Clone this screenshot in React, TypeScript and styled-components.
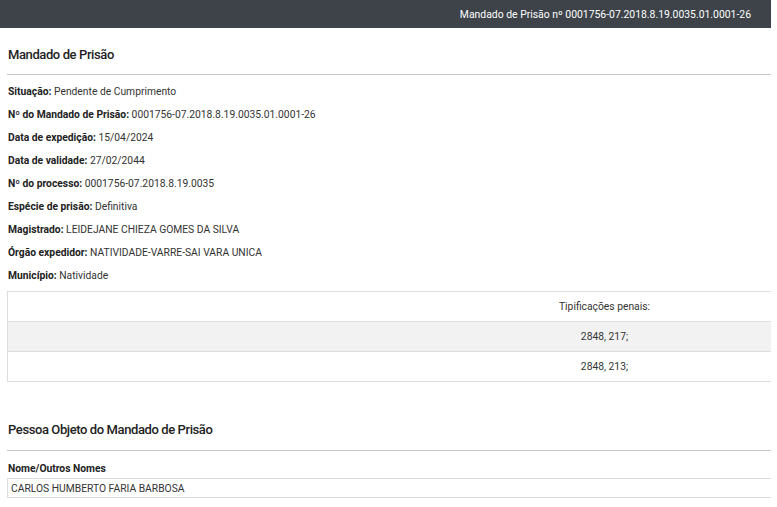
import React from 'react';
import styled, { createGlobalStyle } from 'styled-components';

const GlobalStyle = createGlobalStyle`
  body{
    margin:0;
    background:#fff;
    font-family:Roboto, "Liberation Sans", sans-serif;
    color:#333;
  }
`;

const Page = styled.div`
  width:771px;
`;

const TopBar = styled.div`
  height:28px;
  background:#3d4349;
  color:#fff;
  font-size:10.4px;
  display:flex;
  align-items:center;
  justify-content:flex-end;
  padding-right:20px;
  box-sizing:border-box;
`;

const Content = styled.div`
  padding:0 0 0 7px;
`;

const SectionTitle = styled.h2<{ $top: number; $bottom: number }>`
  margin:${p => p.$top}px 0 0 0;
  padding:0 0 ${p => p.$bottom}px 1px;
  font-size:13px;
  line-height:16px;
  letter-spacing:-0.4px;
  font-weight:500;
  color:#222;
  border-bottom:1px solid #c8c8c8;
`;

const Fields = styled.div`
  display:flex;
  flex-direction:column;
  gap:10px;
  padding:10px 0 0 1px;
`;

const Field = styled.div`
  font-size:10.3px;
  line-height:13px;
  color:#333;
  b{
    font-weight:700;
    color:#222;
  }
`;

const Table = styled.div`
  margin-top:9px;
  border:1px solid #ddd;
  border-right:0;
`;

const Row = styled.div<{ $striped?: boolean }>`
  display:grid;
  grid-template-columns:430px 1fr;
  height:29px;
  align-items:center;
  font-size:10.3px;
  color:#333;
  background:${p => (p.$striped ? '#f2f2f2' : '#fff')};
  & + &{
    border-top:1px solid #ddd;
  }
  span{
    text-align:center;
  }
`;

const Label = styled.div`
  margin:11px 0 0 1px;
  font-size:10.3px;
  line-height:13px;
  font-weight:700;
  color:#222;
`;

const NameBox = styled.div`
  margin-top:3px;
  height:18px;
  border:1px solid #ddd;
  border-right:0;
  display:flex;
  align-items:center;
  padding-left:3px;
  font-size:10.3px;
  color:#333;
`;

const fields: [string, string][] = [
  ['Situação:', 'Pendente de Cumprimento'],
  ['Nº do Mandado de Prisão:', '0001756-07.2018.8.19.0035.01.0001-26'],
  ['Data de expedição:', '15/04/2024'],
  ['Data de validade:', '27/02/2044'],
  ['Nº do processo:', '0001756-07.2018.8.19.0035'],
  ['Espécie de prisão:', 'Definitiva'],
  ['Magistrado:', 'LEIDEJANE CHIEZA GOMES DA SILVA'],
  ['Órgão expedidor:', 'NATIVIDADE-VARRE-SAI VARA UNICA'],
  ['Município:', 'Natividade'],
];

const tipificacoes = ['2848, 217;', '2848, 213;'];

const App: React.FC = () => {
  return (
    <Page>
      <GlobalStyle />
      <TopBar>Mandado de Prisão nº 0001756-07.2018.8.19.0035.01.0001-26</TopBar>
      <Content>
        <SectionTitle $top={19} $bottom={11}>Mandado de Prisão</SectionTitle>
        <Fields>
          {fields.map(([k, v]) => (
            <Field key={k}>
              <b>{k}</b> {v}
            </Field>
          ))}
        </Fields>
        <Table>
          <Row>
            <span />
            <span>Tipificações penais:</span>
          </Row>
          {tipificacoes.map((t, i) => (
            <Row key={t} $striped={i % 2 === 0}>
              <span />
              <span>{t}</span>
            </Row>
          ))}
        </Table>
        <SectionTitle $top={40} $bottom={12}>Pessoa Objeto do Mandado de Prisão</SectionTitle>
        <Label>Nome/Outros Nomes</Label>
        <NameBox>CARLOS HUMBERTO FARIA BARBOSA</NameBox>
      </Content>
    </Page>
  );
};

export default App;
